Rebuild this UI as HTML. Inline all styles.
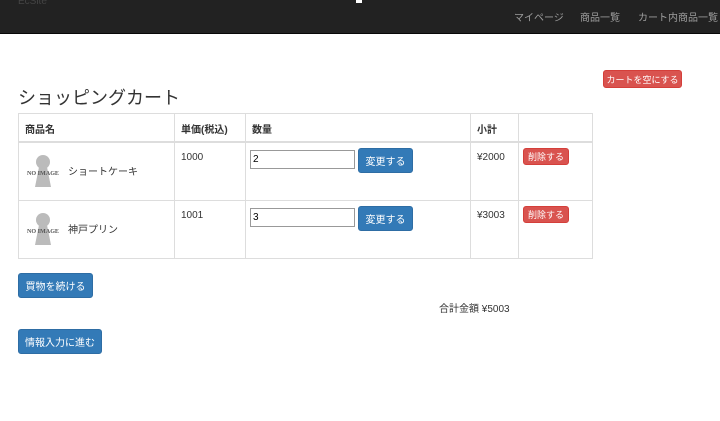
<!DOCTYPE html><html><head><meta charset="utf-8"><style>
body{margin:0;width:720px;height:421px;background:#fff;font-family:"Liberation Sans","Noto Sans CJK JP",sans-serif;font-size:10px;color:#333;position:relative;overflow:hidden}
.nav{position:absolute;left:0;top:0;width:720px;height:33px;background:#222;border-bottom:1px solid #080808}
.nav span{position:absolute;top:9px;color:#9d9d9d;font-size:10px}
.a{position:absolute}
.btn{position:absolute;color:#fff;border-radius:3px;font-size:10px;display:flex;align-items:center;justify-content:center;box-sizing:border-box}
.blue{background:#337ab7;border:1px solid #2e6da4}
.red{background:#d9534f;border:1px solid #d43f3a;font-size:9px}
table{position:absolute;left:18px;top:113px;border-collapse:collapse}
td,th{border:1px solid #ddd;vertical-align:top;padding:9px 6px 6px;text-align:left;font-size:10px}
th{border-bottom:2px solid #ddd;height:14px;padding:7px 6px 5px}
input{position:absolute;width:105px;border:1px solid #999;font-size:10px;padding:0 2px;box-sizing:border-box;height:19px}
.img{position:absolute;width:34px;height:40px}
</style></head><body>
<div class="nav"><span style="left:18px;top:-4px;color:#444">EcSite</span><div class="a" style="left:356px;top:0;width:6px;height:3px;background:#fff"></div>
<span style="left:514px">マイページ</span><span style="left:580px">商品一覧</span><span style="left:638px">カート内商品一覧</span></div>
<div class="btn red" style="left:603px;top:70px;width:79px;height:18px">カートを空にする</div>
<div class="a" style="left:18px;top:84px;font-size:18px;color:#333">ショッピングカート</div>
<table>
<tr><th style="width:143px">商品名</th><th style="width:58px">単価(税込)</th><th style="width:212px">数量</th><th style="width:35px">小計</th><th style="width:61px"></th></tr>
<tr style="height:58px"><td></td><td>1000</td><td></td><td>¥2000</td><td></td></tr>
<tr style="height:58px"><td></td><td>1001</td><td></td><td>¥3003</td><td></td></tr>
</table>
<svg class="img" style="left:26px;top:153px" viewBox="0 0 34 40"><circle cx="17" cy="9" r="7" fill="#bbb"/><path d="M13 14h8l4 20H9z" fill="#bbb"/><text x="1" y="22" font-size="6" textLength="32" lengthAdjust="spacingAndGlyphs" font-family="Liberation Serif" font-weight="bold" fill="#555">NO IMAGE</text></svg>
<svg class="img" style="left:26px;top:211px" viewBox="0 0 34 40"><circle cx="17" cy="9" r="7" fill="#bbb"/><path d="M13 14h8l4 20H9z" fill="#bbb"/><text x="1" y="22" font-size="6" textLength="32" lengthAdjust="spacingAndGlyphs" font-family="Liberation Serif" font-weight="bold" fill="#555">NO IMAGE</text></svg>
<div class="a" style="left:68px;top:163px">ショートケーキ</div>
<div class="a" style="left:68px;top:221px">神戸プリン</div>
<input style="left:250px;top:150px" value="2"><input style="left:250px;top:208px" value="3">
<div class="btn blue" style="left:358px;top:148px;width:55px;height:25px">変更する</div>
<div class="btn blue" style="left:358px;top:206px;width:55px;height:25px">変更する</div>
<div class="btn red" style="left:523px;top:148px;width:46px;height:17px">削除する</div>
<div class="btn red" style="left:523px;top:206px;width:46px;height:17px">削除する</div>
<div class="btn blue" style="left:18px;top:273px;width:75px;height:25px">買物を続ける</div>
<div class="a" style="left:439px;top:300px">合計金額 ¥5003</div>
<div class="btn blue" style="left:18px;top:329px;width:84px;height:25px">情報入力に進む</div>
</body></html>
